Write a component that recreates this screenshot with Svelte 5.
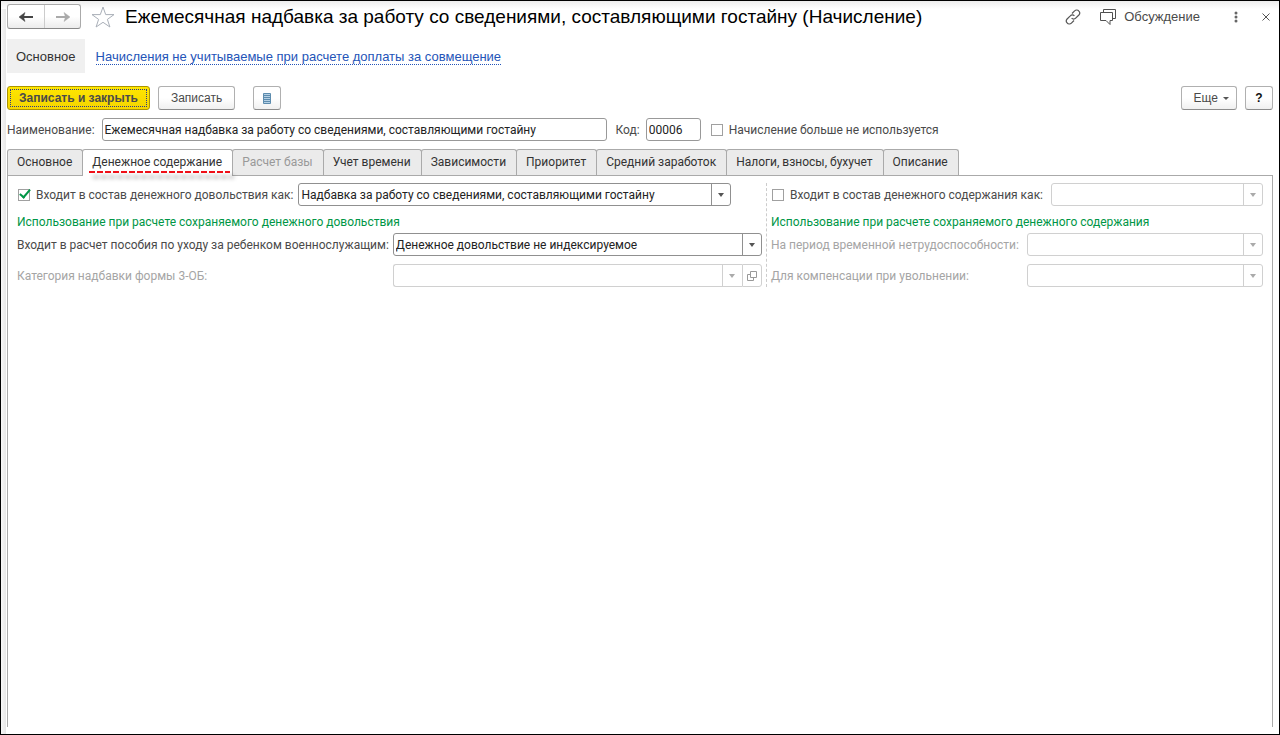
<script>
  let name = $state('Ежемесячная надбавка за работу со сведениями, составляющими гостайну')
  let code = $state('00006')
  let notUsed = $state(false)
  let inAllowance = $state(true)
  let inSalary = $state(false)
  let activeTab = $state('money')

  const tabs = [
    { id: 'main', title: 'Основное' },
    { id: 'money', title: 'Денежное содержание' },
    { id: 'base', title: 'Расчет базы', disabled: true },
    { id: 'time', title: 'Учет времени' },
    { id: 'deps', title: 'Зависимости' },
    { id: 'priority', title: 'Приоритет' },
    { id: 'average', title: 'Средний заработок' },
    { id: 'taxes', title: 'Налоги, взносы, бухучет' },
    { id: 'about', title: 'Описание' }
  ]
</script>

<!-- Drop-down field with its arrow box -->
{#snippet combo(id, value, disabled)}
  <div class="combo" class:disabled>
    <select {id} {disabled}>
      <option>{value}</option>
    </select>
    <span class="arrow"></span>
  </div>
{/snippet}

<div class="window">
  <header class="title-bar">
    <div class="history">
      <button type="button" aria-label="Назад">
        <svg width="14" height="10" viewBox="0 0 14 10"><path d="M3 5h11" stroke="#444" stroke-width="2" /><path d="M0 5l6-4.500-1.500 4.500L6 9.500z" fill="#444" stroke="#444" stroke-width=".5" /></svg>
      </button>
      <button type="button" aria-label="Вперед">
        <svg width="14" height="10" viewBox="0 0 14 10"><path d="M0 5h11" stroke="#aaa" stroke-width="2" /><path d="M14 5L8 .5 9.500 5 8 9.500z" fill="#aaa" stroke="#aaa" stroke-width=".5" /></svg>
      </button>
    </div>
    <button type="button" class="plain star" aria-label="В избранное">
      <svg width="24" height="22" viewBox="0 0 24 22"><path d="M12 1l2.700 7.600H23l-6.600 4.800 2.500 7.600-6.900-4.700L5.100 21l2.500-7.600L1 8.600h8.300z" fill="#fff" stroke="#a9afb8" /></svg>
    </button>
    <h1>Ежемесячная надбавка за работу со сведениями, составляющими гостайну (Начисление)</h1>
    <button type="button" class="plain link-icon" aria-label="Ссылка">
      <svg width="16" height="16" viewBox="0 0 16 16" fill="none" stroke="#555" stroke-width="1.200">
        <path d="M7 4.500l2.600-2.600a2.800 2.800 0 0 1 4.300.2 2.900 2.900 0 0 1 0 3.900l-3.200 3.200a2.800 2.800 0 0 1-4.100 0" />
        <path d="M9 11.500l-2.600 2.600a2.800 2.800 0 0 1-4.300-.2 2.900 2.900 0 0 1 0-3.900l3.200-3.200a2.800 2.800 0 0 1 4.100 0" />
      </svg>
    </button>
    <button type="button" class="plain talk">
      <svg width="16" height="16" viewBox="0 0 16 16" fill="none" stroke="#505050">
        <path d="M3.500 3.500v-3h12v9h-3" />
        <path d="M.5 3.500h12v8h-2.500v4l-4-4H.5z" />
      </svg>
      Обсуждение
    </button>
    <button type="button" class="plain dots" aria-label="Меню">
      <svg width="4" height="12" viewBox="0 0 4 12" fill="#666"><circle cx="2" cy="2" r="1.500" /><circle cx="2" cy="6" r="1.500" /><circle cx="2" cy="10" r="1.500" /></svg>
    </button>
    <button type="button" class="plain" aria-label="Закрыть">
      <svg width="8" height="8" viewBox="0 0 8 8"><path d="M.5.5l7 7M7.500.5l-7 7" stroke="#555" /></svg>
    </button>
  </header>

  <nav>
    <a class="current" href="#main">Основное</a>
    <a class="ref" href="#excluded"><span>Начисления не учитываемые при расчете доплаты за совмещение</span></a>
  </nav>

  <div class="commands">
    <button type="button" class="btn primary">Записать и закрыть</button>
    <button type="button" class="btn save">Записать</button>
    <button type="button" class="btn list" aria-label="Список">
      <svg width="8" height="11" viewBox="0 0 8 11"><path d="M.5.5h7v10h-7z" fill="#b5d0e4" stroke="#5d8cae" /><path d="M1 2.500h6M1 4.500h6M1 6.500h6M1 8.500h6" stroke="#5d8cae" /></svg>
    </button>
    <button type="button" class="btn more">Еще <span class="caret"></span></button>
    <button type="button" class="btn help">?</button>
  </div>

  <div class="fields">
    <label for="name">Наименование:</label>
    <input id="name" class="text name" type="text" bind:value={name} />
    <label for="code">Код:</label>
    <input id="code" class="text code" type="text" bind:value={code} />
    <label class="check"><input type="checkbox" bind:checked={notUsed} />Начисление больше не используется</label>
  </div>

  <div class="tabs" role="tablist">
    {#each tabs as tab}
      <button
        type="button"
        role="tab"
        class:active={activeTab === tab.id}
        aria-selected={activeTab === tab.id}
        disabled={tab.disabled}
        onclick={() => (activeTab = tab.id)}>{tab.title}</button>
    {/each}
  </div>

  <main>
    <section>
      <div class="row first">
        <label class="check"><input type="checkbox" bind:checked={inAllowance} />Входит в состав денежного довольствия как:</label>
        {@render combo('allowance', 'Надбавка за работу со сведениями, составляющими гостайну', false)}
      </div>
      <h2>Использование при расчете сохраняемого денежного довольствия</h2>
      <div class="pairs">
        <label for="childcare">Входит в расчет пособия по уходу за ребенком военнослужащим:</label>
        {@render combo('childcare', 'Денежное довольствие не индексируемое', false)}
        <label class="muted" for="category">Категория надбавки формы 3-ОБ:</label>
        <div class="with-open">
          {@render combo('category', '', true)}
          <button type="button" class="open" disabled aria-label="Открыть">
            <svg width="10" height="10" viewBox="0 0 10 10" fill="none" stroke="#999"><path d="M3.500.5h6v6h-6z" /><path d="M3 3.500H.5v6h6V7" /></svg>
          </button>
        </div>
      </div>
    </section>

    <section class="right">
      <div class="row">
        <label class="check"><input type="checkbox" bind:checked={inSalary} />Входит в состав денежного содержания как:</label>
        {@render combo('salary', '', true)}
      </div>
      <h2>Использование при расчете сохраняемого денежного содержания</h2>
      <div class="pairs">
        <label class="muted" for="sick">На период временной нетрудоспособности:</label>
        {@render combo('sick', '', true)}
        <label class="muted" for="dismissal">Для компенсации при увольнении:</label>
        {@render combo('dismissal', '', true)}
      </div>
    </section>
  </main>
</div>

<style>
  :global(body) {
    background: #fff;
  }

  .window {
    box-sizing: border-box;
    min-height: 100vh;
    display: flex;
    flex-direction: column;
    padding: 2px 6px 7px;
    border: 1px solid #000;
    background:
      linear-gradient(#ededed, #fff) top / 100% 8px no-repeat,
      linear-gradient(90deg, #f7f7f7, #e6e6e6) left / 5px 100% no-repeat,
      #fff;
    font: 12px/16px Roboto, Arial, sans-serif;
    color: #4a4a4a;
  }

  button,
  input,
  select {
    box-sizing: border-box;
    margin: 0;
    font: inherit;
    color: inherit;
  }

  .title-bar,
  nav,
  .commands {
    font-family: 'Liberation Sans', Arial, sans-serif;
  }

  .title-bar {
    display: flex;
    align-items: center;
    height: 27px;
  }

  .history {
    display: flex;
    height: 25px;
    box-sizing: border-box;
    border: 1px solid #aaa;
    border-bottom-color: #888;
    border-radius: 3px;
    background: linear-gradient(#fff 50%, #ececec);
  }

  .history button {
    display: flex;
    align-items: center;
    justify-content: center;
    width: 36px;
    padding: 0;
    border: 0;
    background: none;
  }

  .history button + button {
    border-left: 1px solid #ccc;
  }

  .plain {
    display: flex;
    align-items: center;
    padding: 0;
    border: 0;
    background: none;
  }

  .star {
    margin: 0 10px;
  }

  h1 {
    flex: 1;
    margin: 0;
    font-size: 19px;
    line-height: 24px;
    font-weight: normal;
    color: #000;
    white-space: nowrap;
  }

  .link-icon {
    margin-right: 19px;
  }

  .talk {
    gap: 8px;
    font-size: 13px;
    margin-right: 34px;
  }

  .dots {
    margin-right: 24px;
  }

  .title-bar > :last-child {
    margin-right: 3px;
  }

  nav {
    display: flex;
    align-items: center;
    margin-top: 9px;
    font-size: 13px;
  }

  nav a {
    padding: 10px 9px 8px;
    color: #333;
    text-decoration: none;
  }

  nav .current {
    background: #f0f0f0;
  }

  nav .ref {
    padding-left: 11px;
    color: #2454b8;
  }

  nav .ref span {
    border-bottom: 1px dotted #2454b8;
  }

  .commands {
    display: flex;
    margin-top: 13px;
  }

  .btn {
    display: flex;
    align-items: center;
    justify-content: center;
    height: 24px;
    padding: 0 12px;
    border: 1px solid #b0b0b0;
    border-bottom-color: #8c8c8c;
    border-radius: 3px;
    background: linear-gradient(#fff 50%, #f0f0f0);
  }

  .primary {
    padding: 0 11px;
    border-color: #ab9400;
    background: linear-gradient(#ffe600, #f5d500);
    font-weight: bold;
    outline: 1px dotted #2b3a8a;
    outline-offset: -4px;
  }

  .save {
    margin-left: 8px;
  }

  .list {
    width: 28px;
    margin-left: 18px;
    padding: 0;
  }

  .more {
    gap: 5px;
    margin-left: auto;
    padding: 0 7px 0 12px;
  }

  .help {
    width: 28px;
    margin-left: 8px;
    padding: 0;
    font-weight: bold;
    color: #111;
  }

  .caret {
    border: 3px solid transparent;
    border-top-color: #555;
    border-bottom: 0;
  }

  .fields {
    display: flex;
    align-items: center;
    margin-top: 8px;
  }

  .text {
    height: 23px;
    padding: 0 2px;
    border: 1px solid #999;
    border-radius: 3px;
    color: #222;
  }

  .name {
    flex: 0 1 505px;
    margin: 0 9px 0 7px;
  }

  .code {
    width: 55px;
    margin: 0 10px 0 6px;
  }

  .check {
    display: flex;
    align-items: center;
    gap: 6px;
    white-space: nowrap;
  }

  .check input {
    appearance: none;
    width: 12px;
    height: 12px;
    border: 1px solid #a0a0a0;
    background: #fff;
  }

  /* Green tick that sticks out over the box */
  .check input:checked {
    position: relative;
  }

  .check input:checked::after {
    content: '';
    position: absolute;
    left: 3px;
    top: -3px;
    width: 4px;
    height: 9px;
    border: solid #009646;
    border-width: 0 2px 2px 0;
    transform: rotate(40deg);
  }

  .tabs {
    display: flex;
    margin-top: 8px;
  }

  .tabs button {
    position: relative;
    height: 26px;
    margin-left: -1px;
    padding: 0 10px 2px 9px;
    border: 1px solid #aaa;
    border-bottom: 0;
    border-radius: 3px 3px 0 0;
    background: #ebebeb;
    color: #333;
    white-space: nowrap;
  }

  .tabs button:first-child {
    margin-left: 0;
  }

  .tabs button:disabled {
    color: #999;
  }

  .tabs .active {
    z-index: 1;
    height: 27px;
    margin-bottom: -1px;
    padding-bottom: 3px;
    background: #fff;
  }

  .tabs .active::after {
    content: '';
    position: absolute;
    left: 6px;
    right: 2px;
    bottom: 3px;
    height: 2px;
    background: repeating-linear-gradient(90deg, #f01018 0 6px, transparent 6px 8px);
    filter: drop-shadow(4px 5px 2px rgba(0, 0, 0, 0.4));
  }

  main {
    flex: 1;
    display: grid;
    grid-template-columns: 749fr 497fr;
    align-content: start;
    padding: 7px 9px;
    border: solid #aaa;
    border-width: 1px 1px 0;
  }

  section {
    padding-right: 4px;
  }

  .right {
    padding: 0 0 0 4px;
    border-left: 1px dashed #ccc;
  }

  .row {
    display: flex;
    align-items: center;
    gap: 8px;
  }

  .row .check input {
    margin-left: 1px;
  }

  .row .combo {
    flex: 1;
  }

  .first {
    gap: 5px;
  }

  .first .combo {
    max-width: 433px;
  }

  h2 {
    margin: 8px 0 3px;
    font-size: 12px;
    line-height: 16px;
    font-weight: normal;
    color: #009646;
    white-space: nowrap;
  }

  .pairs {
    display: grid;
    grid-template-columns: auto 1fr;
    align-items: center;
    gap: 8px 4px;
    white-space: nowrap;
  }

  .right .pairs {
    column-gap: 8px;
  }

  .muted {
    color: #a5a5a5;
  }

  .combo {
    position: relative;
    min-width: 0;
  }

  select {
    display: block;
    appearance: none;
    width: 100%;
    height: 23px;
    padding: 0 20px 0 2px;
    border: 1px solid #909090;
    border-radius: 3px;
    background: #fff;
    color: #222;
  }

  .arrow {
    position: absolute;
    top: 1px;
    right: 1px;
    bottom: 1px;
    width: 18px;
    display: grid;
    place-items: center;
    border-left: 1px solid #909090;
    pointer-events: none;
  }

  .arrow::after {
    content: '';
    border: 3px solid transparent;
    border-top: 4px solid #555;
    border-bottom: 0;
  }

  .disabled select {
    border-color: #d0d0d0;
    opacity: 1;
  }

  .disabled .arrow {
    border-color: #d0d0d0;
  }

  .disabled .arrow::after {
    border-top-color: #aaa;
  }

  .with-open {
    display: flex;
  }

  .with-open .combo {
    flex: 1;
  }

  .with-open select {
    border-right: 0;
    border-radius: 3px 0 0 3px;
  }

  .open {
    display: grid;
    place-items: center;
    width: 20px;
    padding: 0;
    border: 1px solid #d0d0d0;
    border-radius: 0 3px 3px 0;
    background: #fff;
  }
</style>
